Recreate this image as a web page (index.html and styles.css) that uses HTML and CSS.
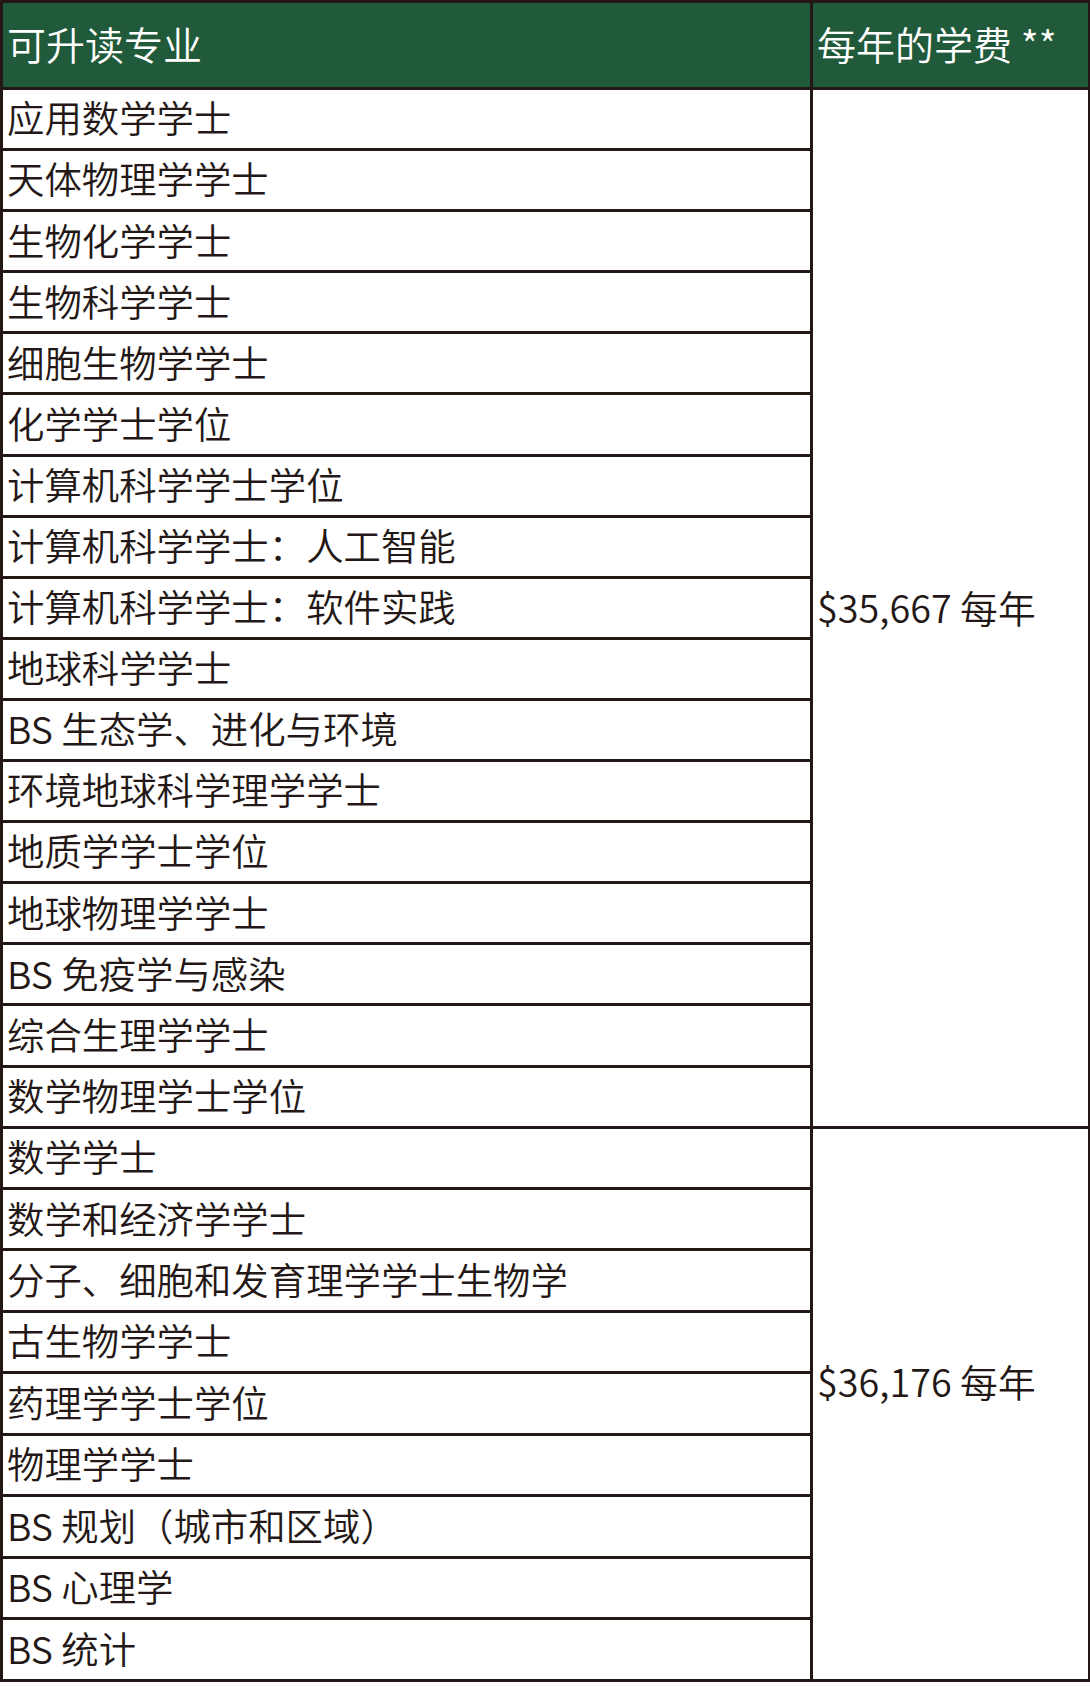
FILE: index.html
```html
<!DOCTYPE html>
<html lang="zh">
<head>
<meta charset="utf-8">
<link rel="stylesheet" href="styles.css">
</head>
<body>
<table class="fees">
  <colgroup><col class="c-major"><col class="c-fee"></colgroup>
  <thead>
    <tr><th>可升读专业</th><th>每年的学费 **</th></tr>
  </thead>
  <tbody>
    <tr><td>应用数学学士</td><td class="fee" rowspan="17">$35,667 每年</td></tr>
    <tr><td>天体物理学学士</td></tr>
    <tr><td>生物化学学士</td></tr>
    <tr><td>生物科学学士</td></tr>
    <tr><td>细胞生物学学士</td></tr>
    <tr><td>化学学士学位</td></tr>
    <tr><td>计算机科学学士学位</td></tr>
    <tr><td>计算机科学学士：人工智能</td></tr>
    <tr><td>计算机科学学士：软件实践</td></tr>
    <tr><td>地球科学学士</td></tr>
    <tr><td>BS 生态学、进化与环境</td></tr>
    <tr><td>环境地球科学理学学士</td></tr>
    <tr><td>地质学学士学位</td></tr>
    <tr><td>地球物理学学士</td></tr>
    <tr><td>BS 免疫学与感染</td></tr>
    <tr><td>综合生理学学士</td></tr>
    <tr><td>数学物理学士学位</td></tr>
  </tbody>
  <tbody class="group-2">
    <tr><td>数学学士</td><td class="fee fee-2" rowspan="9">$36,176 每年</td></tr>
    <tr><td>数学和经济学学士</td></tr>
    <tr><td>分子、细胞和发育理学学士生物学</td></tr>
    <tr><td>古生物学学士</td></tr>
    <tr><td>药理学学士学位</td></tr>
    <tr><td>物理学学士</td></tr>
    <tr><td>BS 规划（城市和区域）</td></tr>
    <tr><td>BS 心理学</td></tr>
    <tr><td>BS 统计</td></tr>
  </tbody>
</table>
</body>
</html>
```
FILE: styles.css
```css
html, body {
  margin: 0;
  padding: 0;
  background: #ffffff;
}
body {
  font-family: "Noto Sans CJK SC", "Noto Sans", sans-serif;
  color: #231815;
}
.fees {
  border-collapse: collapse;
  width: 1088px;
  table-layout: fixed;
  font-size: 37.4px;
  line-height: 1;
}
.c-major { width: 810px; }
.c-fee { width: 278px; }
.fees th,
.fees td {
  border: 3px solid #231815;
  text-align: left;
  font-weight: 350;
  white-space: nowrap;
  padding: 0 0 0 4px;
}
.fees th {
  background: #215a3a;
  color: #ffffff;
  font-size: 39px;
  height: 80px;
  padding-bottom: 4px;
}
.fees td {
  height: 56.1px;
  padding-bottom: 2px;
}
.fees .group-2 td {
  height: 56.45px;
}
.fees td.fee {
  vertical-align: middle;
  padding-left: 4px;
  font-size: 37.8px;
}
.fees td.fee-2 {
  padding-bottom: 46px;
}
```
